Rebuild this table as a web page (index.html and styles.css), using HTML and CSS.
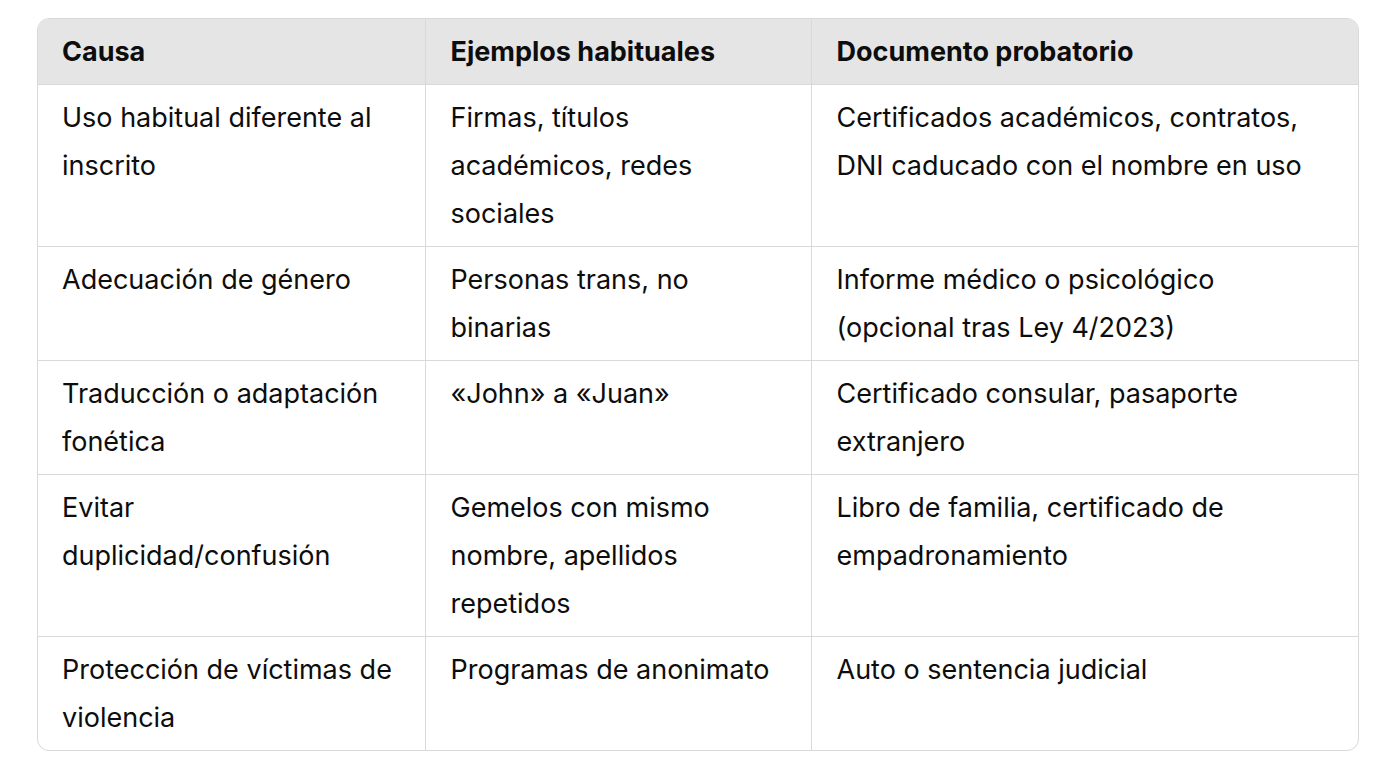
FILE: index.html
```html
<!DOCTYPE html>
<html lang="es">
<head>
<meta charset="utf-8">
<link rel="stylesheet" href="styles.css">
</head>
<body>
<div class="table-wrap">
<table class="data">
<colgroup><col class="c1"><col class="c2"><col class="c3"></colgroup>
<thead>
<tr><th>Causa</th><th>Ejemplos habituales</th><th>Documento probatorio</th></tr>
</thead>
<tbody>
<tr><td>Uso habitual diferente al inscrito</td><td>Firmas, títulos académicos, redes sociales</td><td>Certificados académicos, contratos, DNI caducado con el nombre en uso</td></tr>
<tr><td>Adecuación de género</td><td>Personas trans, no binarias</td><td>Informe médico o psicológico (opcional tras Ley 4/2023)</td></tr>
<tr><td>Traducción o adaptación fonética</td><td>«John» a «Juan»</td><td>Certificado consular, pasaporte extranjero</td></tr>
<tr><td>Evitar duplicidad/confusión</td><td>Gemelos con mismo nombre, apellidos repetidos</td><td>Libro de familia, certificado de empadronamiento</td></tr>
<tr><td>Protección de víctimas de violencia</td><td>Programas de anonimato</td><td>Auto o sentencia judicial</td></tr>
</tbody>
</table>
</div>
</body>
</html>
```
FILE: styles.css
```css
html, body {
  margin: 0;
  padding: 0;
  background: #ffffff;
}
body {
  font-family: Inter, "Noto Sans", sans-serif;
  color: #0d0d0d;
  padding: 18px 0 0 37px;
}
.table-wrap {
  width: 1320px;
  border: 1px solid #d9d9d9;
  border-radius: 12px;
  overflow: hidden;
}
.data {
  width: 1320px;
  table-layout: fixed;
  border-collapse: collapse;
  font-size: 27px;
  line-height: 48px;
}
.c1 { width: 387px; }
.c2 { width: 386px; }
.c3 { width: 547px; }
.data th, .data td {
  text-align: left;
  vertical-align: top;
  padding: 8.5px 24px 8.5px 25px;
  border-right: 1px solid #d9d9d9;
  border-bottom: 1px solid #d9d9d9;
}
.data th:first-child, .data td:first-child { padding-left: 24px; }
.data th:last-child, .data td:last-child { border-right: none; }
.data tbody tr:last-child td { border-bottom: none; }
.data th {
  background: #e5e5e5;
  font-weight: 700;
}
```
